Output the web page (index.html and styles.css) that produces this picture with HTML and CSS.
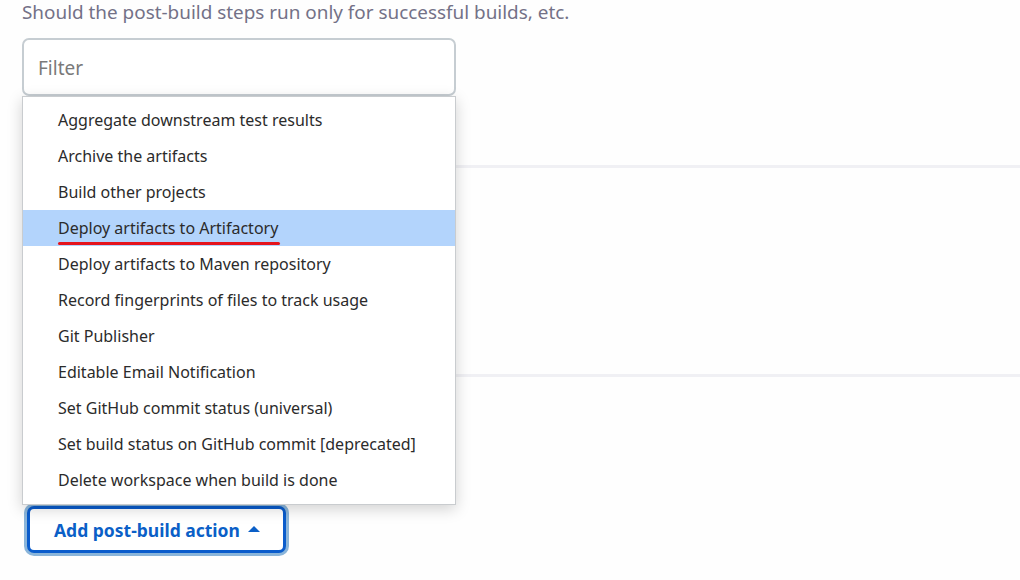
FILE: index.html
```html
<!DOCTYPE html>
<html lang="en">
<head>
<meta charset="utf-8">
<title>Post-build actions</title>
<link rel="stylesheet" href="styles.css">
</head>
<body>
<div class="page">
  <p class="description">Should the post-build steps run only for successful builds, etc.</p>
  <div class="filter-wrap">
    <input class="filter" type="text" placeholder="Filter">
  </div>
  <div class="sections">
    <div class="gap-top"></div>
    <div class="section section-a"></div>
    <div class="section section-b"></div>
    <div class="button-row">
      <button class="add-btn">Add post-build action <span class="caret"></span></button>
    </div>
  </div>
  <ul class="menu">
    <li class="menu-item">Aggregate downstream test results</li>
    <li class="menu-item">Archive the artifacts</li>
    <li class="menu-item">Build other projects</li>
    <li class="menu-item is-active"><span class="marked">Deploy artifacts to Artifactory</span></li>
    <li class="menu-item">Deploy artifacts to Maven repository</li>
    <li class="menu-item">Record fingerprints of files to track usage</li>
    <li class="menu-item">Git Publisher</li>
    <li class="menu-item">Editable Email Notification</li>
    <li class="menu-item">Set GitHub commit status (universal)</li>
    <li class="menu-item">Set build status on GitHub commit [deprecated]</li>
    <li class="menu-item">Delete workspace when build is done</li>
  </ul>
</div>
</body>
</html>
```

FILE: styles.css
```css
* { box-sizing: border-box; }
html, body {
  margin: 0;
  padding: 0;
  background: #fefefe;
  width: 1020px;
  height: 580px;
  overflow: hidden;
  font-family: "Noto Sans", "Open Sans", sans-serif;
}
.page {
  position: relative;
  padding-left: 22px;
}
.description {
  margin: 0;
  height: 38px;
  padding-top: 0;
  line-height: 25px;
  font-size: 18.9px;
  color: #737187;
}
.filter-wrap {
  width: 434px;
}
.filter {
  display: block;
  width: 434px;
  height: 58px;
  border: 2px solid #c6cdd2;
  border-radius: 7px;
  padding: 2px 14px 0;
  font-family: inherit;
  font-size: 19px;
  color: #333;
  background: #fff;
  outline: none;
}
.filter::placeholder { color: #7a7a7a; }
.sections {
  display: flex;
  flex-direction: column;
}
.gap-top { height: 69px; }
.section {
  border-top: 3px solid #f0f0f4;
}
.section-a { height: 209px; }
.section-b { height: 129px; }
.button-row {
  display: flex;
}
.add-btn {
  display: flex;
  align-items: center;
  gap: 8px;
  margin-top: 3px;
  margin-left: 5px;
  width: 259px;
  height: 47px;
  padding: 0 0 0 24px;
  border: 3px solid #0a5ccc;
  border-radius: 7px;
  box-shadow: 0 0 0 3px #8ab5da;
  background: #fff;
  color: #0b5fc7;
  font-family: inherit;
  font-weight: 700;
  font-size: 17.5px;
}
.caret {
  width: 0;
  height: 0;
  border-left: 6.5px solid transparent;
  border-right: 6.5px solid transparent;
  border-bottom: 6px solid #0b5fc7;
  margin-top: -2px;
}
.menu {
  position: absolute;
  top: 96px;
  left: 22px;
  width: 434px;
  margin: 0;
  padding: 5px 0 6px;
  list-style: none;
  background: #fff;
  border: 1px solid #c9cccf;
  box-shadow: 0 4px 14px rgba(0, 0, 0, 0.18);
}
.menu-item {
  height: 36px;
  line-height: 36px;
  padding-left: 35px;
  font-size: 16px;
  color: #2b2b2b;
  white-space: nowrap;
}
.menu-item.is-active {
  background: #b3d4fc;
}
.marked {
  display: inline-block;
  position: relative;
}
.marked::after {
  content: "";
  position: absolute;
  left: 0;
  right: -2px;
  bottom: 1px;
  height: 3px;
  border-radius: 2px;
  background: #e5141c;
}
```
